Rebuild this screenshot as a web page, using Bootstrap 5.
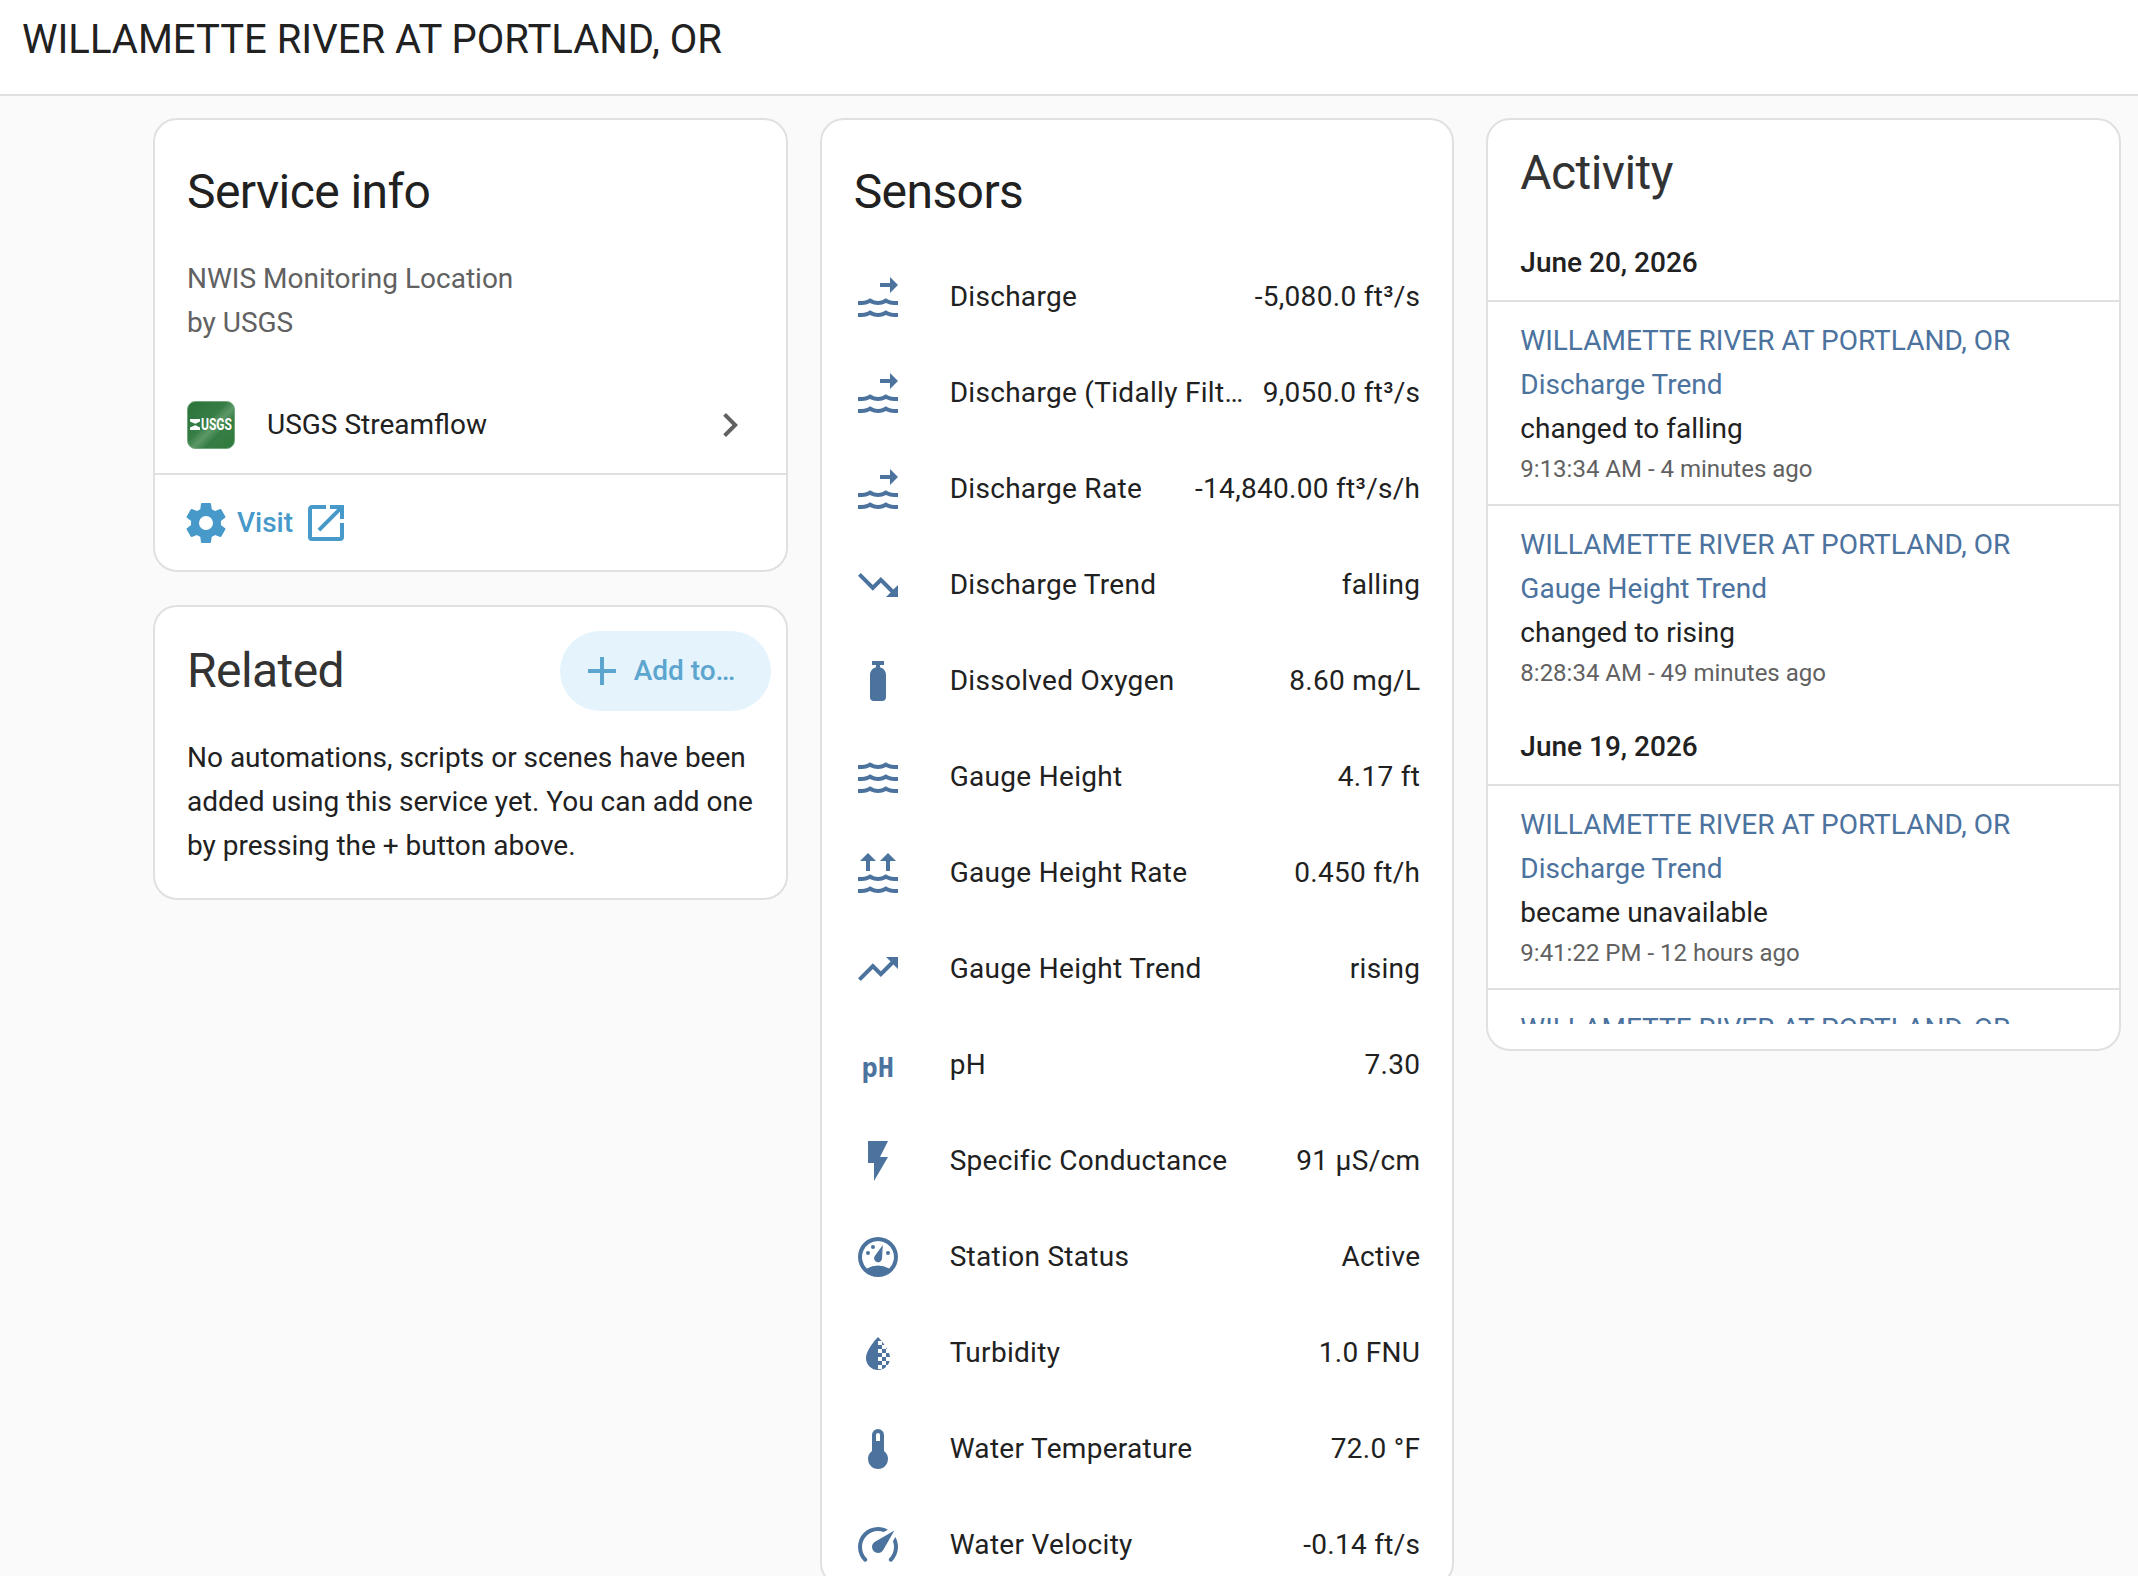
<!DOCTYPE html>
<html lang="en">
<head>
    <meta charset="UTF-8">
    <title>WILLAMETTE RIVER AT PORTLAND, OR</title>
    <link href="https://cdn.jsdelivr.net/npm/bootstrap@5.3.0/dist/css/bootstrap.min.css" rel="stylesheet">
    <style>
        html, body { height: 100%; overflow: hidden; }
        body { background: #fafafa; font-family: Roboto, "Liberation Sans", sans-serif; font-size: 28px; line-height: 44px; color: #212121; }
        .top-bar { height: 96px; background: #fff; border-bottom: 2px solid #e0e0e0; padding: 0 22px; font-size: 40px; line-height: 80px; }
        .columns { display: grid; grid-template-columns: repeat(3, 1fr); gap: 32px; padding: 22px 17px 0 153px; align-items: start; }
        .info-card { background: #fff; border: 2px solid #e0e0e0; border-radius: 24px; overflow: hidden; }
        .card-gap { margin-top: 33px; }
        .card-name { font-size: 48px; line-height: 64px; font-weight: 400; letter-spacing: -.012em; margin: 0; }
        .card-name-soft { color: #333; }
        .name-block { padding: 40px 32px 33px; }
        .muted-text { color: #616161; }
        .service-lines { padding: 0 32px; margin-bottom: 40px; }
        .service-row { height: 80px; padding: 0 32px; margin-bottom: 8px; }
        .usgs-logo { width: 48px; height: 48px; margin-right: 32px; flex-shrink: 0; }
        .service-actions { height: 97px; border-top: 2px solid #e0e0e0; padding-left: 27px; color: #4699c9; }
        .service-actions .visit-label { margin: 0 9px 0 7px; font-weight: 500; }
        .icon-48 { width: 48px; height: 48px; fill: currentColor; flex-shrink: 0; }
        .chevron-icon { color: #616161; }
        .related-head { padding: 24px 15px 25px 32px; }
        .add-btn { height: 80px; width: 211px; border-radius: 40px; background: #e5f3fc; color: #5ca5cf; font-weight: 500; padding: 0 0 0 18px; }
        .add-btn .icon-48 { margin-right: 8px; }
        .related-text { padding: 0 30px 30px 32px; margin: 0; }
        .sensor-list { display: flex; flex-direction: column; gap: 16px; padding: 0 32px; letter-spacing: .3px; }
        .sensor-row { height: 80px; }
        .sensor-icon { width: 48px; height: 48px; margin-right: 48px; fill: #4c729e; color: #4c729e; flex-shrink: 0; }
        .ph-glyph { font-family: "DejaVu Sans Mono", monospace; font-weight: 700; font-size: 27px; line-height: 53px; text-align: center; letter-spacing: 0; }
        .sensor-value { margin-left: 16px; white-space: nowrap; }
        .activity-head { padding: 21px 32px 19px; }
        .log-body { height: 800px; overflow: hidden; margin-bottom: 25px; }
        .log-date { font-weight: 500; padding: 17px 32px 15px; border-bottom: 2px solid #e0e0e0; }
        .log-item { padding: 17px 32px; }
        .log-item + .log-item { border-top: 2px solid #e0e0e0; }
        .log-link { color: #4c729e; display: block; text-decoration: none; }
        .log-time { font-size: 24px; line-height: 36px; color: #616161; }
    </style>
</head>
<body>
<svg width="0" height="0" class="position-absolute">
    <defs>
        <pattern id="checker" width="4" height="4" patternUnits="userSpaceOnUse">
            <rect x="0" y="0" width="2" height="2" fill="#4c729e"/>
            <rect x="2" y="2" width="2" height="2" fill="#4c729e"/>
        </pattern>
        <path id="waveRow" d="M20,12H22V14H20C18.62,14 17.26,13.65 16,13C13.5,14.3 10.5,14.3 8,13C6.74,13.65 5.37,14 4,14H2V12H4C5.39,12 6.78,11.53 8,10.67C10.44,12.38 13.56,12.38 16,10.67C17.22,11.53 18.61,12 20,12Z"/>
    </defs>
    <symbol id="i-discharge" viewBox="0 0 24 24">
        <path d="M13 5H18V2L22 6L18 10V7H13Z"/>
        <use href="#waveRow" y="2"/><use href="#waveRow" y="8"/>
    </symbol>
    <symbol id="i-down" viewBox="0 0 24 24"><path d="M16,18L18.29,15.71L13.41,10.83L9.41,14.83L2,7.41L3.41,6L9.41,12L13.41,8L19.71,14.29L22,12V18H16Z"/></symbol>
    <symbol id="i-up" viewBox="0 0 24 24"><path d="M16,6L18.29,8.29L13.41,13.17L9.41,9.17L2,16.59L3.41,18L9.41,12L13.41,16L19.71,9.71L22,12V6H16Z"/></symbol>
    <symbol id="i-cylinder" viewBox="0 0 24 24"><path d="M16,9V20A2,2 0 0,1 14,22H10A2,2 0 0,1 8,20V9C8,7.14 9.28,5.57 11,5.13V4H9V2H15V4H13V5.13C14.72,5.57 16,7.14 16,9Z"/></symbol>
    <symbol id="i-waves" viewBox="0 0 24 24">
        <use href="#waveRow" y="-6"/><use href="#waveRow"/><use href="#waveRow" y="6"/>
    </symbol>
    <symbol id="i-waves-up" viewBox="0 0 24 24">
        <path d="M7 2L3 6H6V11H8V6H11Z"/><path d="M17 2L13 6H16V11H18V6H21Z"/>
        <use href="#waveRow" y="2"/><use href="#waveRow" y="8"/>
    </symbol>
    <symbol id="i-flash" viewBox="0 0 24 24"><path d="M7,2V13H10V22L17,10H13L17,2H7Z"/></symbol>
    <symbol id="i-gauge" viewBox="0 0 24 24">
        <path fill-rule="evenodd" d="M12 2a10 10 0 1 0 0 20a10 10 0 0 0 0-20ZM12 4a8 8 0 0 1 5.6 13.7Q12 14.7 6.4 17.7A8 8 0 0 1 12 4Z"/>
        <circle cx="7" cy="10" r="1"/><circle cx="9.5" cy="7" r="1"/><circle cx="17" cy="10" r="1"/>
        <path d="M14.4 6L14 12.9A2 2 0 1 1 10.3 11.6Z"/>
    </symbol>
    <symbol id="i-drop" viewBox="0 0 24 24">
        <path d="M12 4C12 4 6 10 6 14.5A6 6 0 0 0 12 20.5Z"/>
        <path fill="url(#checker)" d="M12 4C12 4 18 10 18 14.5A6 6 0 0 1 12 20.5Z"/>
    </symbol>
    <symbol id="i-thermo" viewBox="0 0 24 24"><path fill-rule="evenodd" d="M15 13V5A3 3 0 0 0 9 5V13A5 5 0 1 0 15 13M12 4A1 1 0 0 1 13 5V8H11V5A1 1 0 0 1 12 4Z"/></symbol>
    <symbol id="i-speed" viewBox="0 0 24 24"><path d="M12,16A3,3 0 0,1 9,13C9,11.88 9.61,10.9 10.5,10.39L20.21,4.77L14.68,14.35C14.18,15.33 13.17,16 12,16M12,3C13.81,3 15.5,3.5 16.97,4.32L14.87,5.53C14,5.19 13,5 12,5A8,8 0 0,0 4,13C4,15.21 4.89,17.21 6.34,18.65H6.35C6.74,19.04 6.74,19.67 6.35,20.06C5.96,20.45 5.32,20.45 4.93,20.07V20.07C3.12,18.26 2,15.76 2,13A10,10 0 0,1 12,3M22,13C22,15.76 20.88,18.26 19.07,20.07V20.07C18.68,20.45 18.05,20.45 17.66,20.06C17.27,19.67 17.27,19.04 17.66,18.65V18.65C19.11,17.2 20,15.21 20,13C20,12 19.81,11 19.46,10.1L20.68,8C21.5,9.5 22,11.18 22,13Z"/></symbol>
</svg>

<div class="top-bar">WILLAMETTE RIVER AT PORTLAND, OR</div>

<div class="columns">
    <div>
        <div class="info-card">
            <div class="name-block"><h2 class="card-name">Service info</h2></div>
            <div class="service-lines muted-text">NWIS Monitoring Location<br>by USGS</div>
            <div class="service-row d-flex align-items-center">
                <svg class="usgs-logo" viewBox="0 0 48 48">
                    <defs>
                        <linearGradient id="usgsGreen" x1="0" y1="0" x2="1" y2="1">
                            <stop offset="0" stop-color="#2b733a"/>
                            <stop offset=".42" stop-color="#357d44"/>
                            <stop offset=".55" stop-color="#5d9869"/>
                            <stop offset=".68" stop-color="#357d44"/>
                            <stop offset="1" stop-color="#2f7a3e"/>
                        </linearGradient>
                    </defs>
                    <rect x=".5" y=".5" width="47" height="47" rx="8" fill="url(#usgsGreen)" stroke="#6fa67a"/>
                    <rect x="3" y="18" width="10" height="11" fill="#fff"/>
                    <path fill="#357d44" d="M3 20.5L10 23.5L3 26.5Z"/>
                    <path fill="#357d44" d="M13 20.5L7 23.5L13 26.5Z"/>
                    <text x="14" y="29" font-family="Roboto, sans-serif" font-weight="700" font-size="16" fill="#fff" textLength="31" lengthAdjust="spacingAndGlyphs">USGS</text>
                </svg>
                <span class="flex-grow-1">USGS Streamflow</span>
                <svg class="icon-48 chevron-icon" viewBox="0 0 24 24"><path d="M8.59,16.58L13.17,12L8.59,7.41L10,6L16,12L10,18L8.59,16.58Z"/></svg>
            </div>
            <div class="service-actions d-flex align-items-center">
                <svg class="icon-48" viewBox="0 0 24 24"><path d="M12,15.5A3.5,3.5 0 0,1 8.5,12A3.5,3.5 0 0,1 12,8.5A3.5,3.5 0 0,1 15.5,12A3.5,3.5 0 0,1 12,15.5M19.43,12.97C19.47,12.65 19.5,12.33 19.5,12C19.5,11.67 19.47,11.34 19.43,11L21.54,9.37C21.73,9.22 21.78,8.95 21.66,8.73L19.66,5.27C19.54,5.05 19.27,4.96 19.05,5.05L16.56,6.05C16.04,5.66 15.5,5.32 14.87,5.07L14.5,2.42C14.46,2.18 14.25,2 14,2H10C9.75,2 9.54,2.18 9.5,2.42L9.13,5.07C8.5,5.32 7.96,5.66 7.44,6.05L4.95,5.05C4.73,4.96 4.46,5.05 4.34,5.27L2.34,8.73C2.21,8.95 2.27,9.22 2.46,9.37L4.57,11C4.53,11.34 4.5,11.67 4.5,12C4.5,12.33 4.53,12.65 4.57,12.97L2.46,14.63C2.27,14.78 2.21,15.05 2.34,15.27L4.34,18.73C4.46,18.95 4.73,19.03 4.95,18.95L7.44,17.94C7.96,18.34 8.5,18.68 9.13,18.93L9.5,21.58C9.54,21.82 9.75,22 10,22H14C14.25,22 14.46,21.82 14.5,21.58L14.87,18.93C15.5,18.67 16.04,18.34 16.56,17.94L19.05,18.95C19.27,19.03 19.54,18.95 19.66,18.73L21.66,15.27C21.78,15.05 21.73,14.78 21.54,14.63L19.43,12.97Z"/></svg>
                <span class="visit-label">Visit</span>
                <svg class="icon-48" viewBox="0 0 24 24"><path d="M14,3V5H17.59L7.76,14.83L9.17,16.24L19,6.41V10H21V3M19,19H5V5H12V3H5C3.89,3 3,3.9 3,5V19A2,2 0 0,0 5,21H19A2,2 0 0,0 21,19V12H19V19Z"/></svg>
            </div>
        </div>

        <div class="info-card card-gap">
            <div class="related-head d-flex align-items-center justify-content-between">
                <h2 class="card-name card-name-soft">Related</h2>
                <div class="add-btn d-flex align-items-center">
                    <svg class="icon-48" viewBox="0 0 24 24"><path d="M19,13H13V19H11V13H5V11H11V5H13V11H19V13Z"/></svg>
                    <span>Add to…</span>
                </div>
            </div>
            <p class="related-text">No automations, scripts or scenes have been added using this service yet. You can add one by pressing the + button above.</p>
        </div>
    </div>

    <div class="info-card">
        <div class="name-block"><h2 class="card-name">Sensors</h2></div>
        <div class="sensor-list" id="sensors"></div>
    </div>

    <div class="info-card">
        <div class="activity-head"><h2 class="card-name card-name-soft">Activity</h2></div>
        <div class="log-body">
            <div class="log-date">June 20, 2026</div>
            <div class="log-item">
                <a class="log-link" href="#">WILLAMETTE RIVER AT PORTLAND, OR</a>
                <a class="log-link" href="#">Discharge Trend</a>
                <div>changed to falling</div>
                <div class="log-time">9:13:34 AM - 4 minutes ago</div>
            </div>
            <div class="log-item">
                <a class="log-link" href="#">WILLAMETTE RIVER AT PORTLAND, OR</a>
                <a class="log-link" href="#">Gauge Height Trend</a>
                <div>changed to rising</div>
                <div class="log-time">8:28:34 AM - 49 minutes ago</div>
            </div>
            <div class="log-date">June 19, 2026</div>
            <div class="log-item">
                <a class="log-link" href="#">WILLAMETTE RIVER AT PORTLAND, OR</a>
                <a class="log-link" href="#">Discharge Trend</a>
                <div>became unavailable</div>
                <div class="log-time">9:41:22 PM - 12 hours ago</div>
            </div>
            <div class="log-item">
                <a class="log-link" href="#">WILLAMETTE RIVER AT PORTLAND, OR</a>
            </div>
        </div>
    </div>
</div>

<script>
    const sensors = [
        ['i-discharge', 'Discharge', '-5,080.0 ft³/s'],
        ['i-discharge', 'Discharge (Tidally Filtered)', '9,050.0 ft³/s'],
        ['i-discharge', 'Discharge Rate', '-14,840.00 ft³/s/h'],
        ['i-down', 'Discharge Trend', 'falling'],
        ['i-cylinder', 'Dissolved Oxygen', '8.60 mg/L'],
        ['i-waves', 'Gauge Height', '4.17 ft'],
        ['i-waves-up', 'Gauge Height Rate', '0.450 ft/h'],
        ['i-up', 'Gauge Height Trend', 'rising'],
        ['pH', 'pH', '7.30'],
        ['i-flash', 'Specific Conductance', '91 µS/cm'],
        ['i-gauge', 'Station Status', 'Active'],
        ['i-drop', 'Turbidity', '1.0 FNU'],
        ['i-thermo', 'Water Temperature', '72.0 °F'],
        ['i-speed', 'Water Velocity', '-0.14 ft/s']
    ];

    const list = document.getElementById('sensors');
    for (const [icon, name, value] of sensors) {
        const glyph = icon === 'pH'
            ? '<div class="sensor-icon ph-glyph">pH</div>'
            : `<svg class="sensor-icon"><use href="#${icon}"/></svg>`;
        const row = document.createElement('div');
        row.className = 'sensor-row d-flex align-items-center';
        row.innerHTML = `${glyph}<div class="flex-grow-1 text-truncate">${name}</div><div class="sensor-value">${value}</div>`;
        list.appendChild(row);
    }
</script>
<script src="https://cdn.jsdelivr.net/npm/bootstrap@5.3.0/dist/js/bootstrap.bundle.min.js"></script>
</body>
</html>
